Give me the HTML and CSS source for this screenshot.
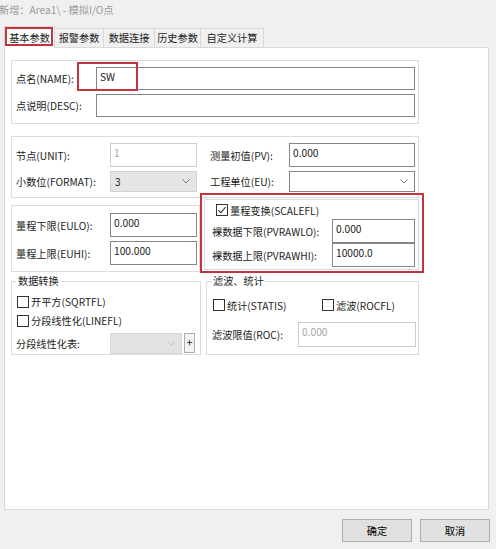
FILE: index.html
```html
<!DOCTYPE html>
<html lang="zh-CN">
<head>
<meta charset="utf-8">
<title>模拟I/O点</title>
<link rel="stylesheet" href="styles.css">
</head>
<body>
<div class="title">新增：Area1\ - 模拟I/O点</div>
<div class="tabs">
  <div class="tab tab-active t1">基本参数</div>
  <div class="tab t2">报警参数</div>
  <div class="tab t3">数据连接</div>
  <div class="tab t4">历史参数</div>
  <div class="tab t5">自定义计算</div>
</div>
<div class="panel">
  <div class="group g1">
    <div class="row name-row"><span class="lbl l80">点名(NAME):</span><div class="field f319">SW</div></div>
    <div class="row"><span class="lbl l80">点说明(DESC):</span><div class="field f319"></div></div>
  </div>

  <div class="group g2">
    <div class="col">
      <div class="row h24"><span class="lbl l94">节点(UNIT):</span><div class="field f87 h24 disabled">1</div></div>
      <div class="row h21"><span class="lbl l94">小数位(FORMAT):</span><div class="combo f87 combo-gray"><span>3</span><svg class="chev" width="8" height="5" viewBox="0 0 8 5"><path d="M0.5 0.5 L4 4 L7.5 0.5" fill="none" stroke="#777"/></svg></div></div>
    </div>
    <div class="col">
      <div class="row h24"><span class="lbl l79">测量初值(PV):</span><div class="field f126 h24">0.000</div></div>
      <div class="row h21"><span class="lbl l79">工程单位(EU):</span><div class="combo f126"><span></span><svg class="chev" width="8" height="5" viewBox="0 0 8 5"><path d="M0.5 0.5 L4 4 L7.5 0.5" fill="none" stroke="#777"/></svg></div></div>
    </div>
  </div>

  <div class="row3">
    <div class="group g3l">
      <div class="row"><span class="lbl l94">量程下限(EULO):</span><div class="field f87 h24">0.000</div></div>
      <div class="row"><span class="lbl l94">量程上限(EUHI):</span><div class="field f87 h24">100.000</div></div>
    </div>
    <div class="group g3r">
      <div class="cb-row scale-row">
        <svg class="cb" width="12" height="12" viewBox="0 0 12 12"><rect x="0.5" y="0.5" width="11" height="11" fill="#fff" stroke="#333"/><path d="M2.4 6.1 L4.8 8.6 L9.6 3.2" fill="none" stroke="#333" stroke-width="1.1"/></svg>
        <span>量程变换(SCALEFL)</span>
      </div>
      <div class="row"><span class="lbl l120">裸数据下限(PVRAWLO):</span><div class="field f83 h24">0.000</div></div>
      <div class="row"><span class="lbl l120">裸数据上限(PVRAWHI):</span><div class="field f83 h24">10000.0</div></div>
    </div>
  </div>

  <div class="row4">
    <fieldset class="fs fs-left">
      <legend>数据转换</legend>
      <div class="cb-row h19">
        <svg class="cb" width="12" height="12" viewBox="0 0 12 12"><rect x="0.5" y="0.5" width="11" height="11" fill="#fff" stroke="#333"/></svg>
        <span>开平方(SQRTFL)</span>
      </div>
      <div class="cb-row h19">
        <svg class="cb" width="12" height="12" viewBox="0 0 12 12"><rect x="0.5" y="0.5" width="11" height="11" fill="#fff" stroke="#333"/></svg>
        <span>分段线性化(LINEFL)</span>
      </div>
      <div class="row sel-row">
        <span class="lbl l94">分段线性化表:</span>
        <div class="combo f72 h20 combo-disabled"><span></span><svg class="chev" width="8" height="5" viewBox="0 0 8 5"><path d="M0.5 0.5 L4 4 L7.5 0.5" fill="none" stroke="#c4c4c4"/></svg></div>
        <div class="plus">+</div>
      </div>
    </fieldset>
    <fieldset class="fs fs-right">
      <legend>滤波、统计</legend>
      <div class="cb-row h26">
        <div class="cb-item stat">
          <svg class="cb" width="12" height="12" viewBox="0 0 12 12"><rect x="0.5" y="0.5" width="11" height="11" fill="#fff" stroke="#333"/></svg>
          <span>统计(STATIS)</span>
        </div>
        <div class="cb-item">
          <svg class="cb" width="12" height="12" viewBox="0 0 12 12"><rect x="0.5" y="0.5" width="11" height="11" fill="#fff" stroke="#333"/></svg>
          <span>滤波(ROCFL)</span>
        </div>
      </div>
      <div class="row roc-row"><span class="lbl l86">滤波限值(ROC):</span><div class="field f118 h25 disabled">0.000</div></div>
    </fieldset>
  </div>
</div>
<div class="buttons">
  <button class="btn">确定</button>
  <button class="btn">取消</button>
</div>
</body>
</html>
```
FILE: styles.css
```css
* { box-sizing: border-box; }
html, body { margin: 0; padding: 0; }
body {
  width: 496px;
  height: 549px;
  overflow: hidden;
  background: #f0f0f0;
  font-family: "Noto Sans CJK SC", "Noto Sans", sans-serif;
  font-size: 10.2px;
  color: #222;
}
.title {
  height: 20px;
  line-height: 20px;
  color: #9a9a9a;
  margin-left: -1px;
  white-space: nowrap;
}
.tabs {
  display: flex;
  align-items: flex-end;
  height: 21px;
  margin-top: 6px;
  padding-left: 4px;
}
.tab {
  height: 19px;
  line-height: 18px;
  border: 1px solid #d9d9d9;
  border-bottom: 0;
  margin-left: -1px;
  text-align: center;
  background: #f0f0f0;
  white-space: nowrap;
}
.tab:first-child { margin-left: 0; }
.t1 { width: 51px; }
.t2 { width: 50px; }
.t3 { width: 52px; }
.t4 { width: 47px; }
.t5 { width: 64px; }
.tab-active {
  position: relative;
  z-index: 1;
  height: 22px;
  margin-bottom: -1px;
  background: #fff;
  line-height: 21px;
}
.tab-active::after {
  content: "";
  position: absolute;
  left: 0;
  top: 0;
  right: 1px;
  bottom: 2px;
  border: 2px solid #c4343f;
}
.panel {
  margin-left: 4px;
  width: 485px;
  height: 463px;
  background: #fff;
  border: 1px solid #d9d9d9;
  padding: 12px 0 0 6px;
}
.group { border: 1px solid #dcdcdc; }
.row { display: flex; align-items: center; }
.lbl { flex: none; white-space: nowrap; }
.l79 { width: 79px; }
.l80 { width: 80px; }
.l86 { width: 86px; }
.l94 { width: 94px; }
.l120 { width: 120px; }
.field {
  flex: none;
  height: 23px;
  border: 1px solid #858585;
  background: #fff;
  padding: 2px 0 0 3px;
  line-height: 14px;
  white-space: nowrap;
}
.field.disabled { border-color: #cccccc; color: #a6a6a6; }
.f72 { width: 72px; }
.f83 { width: 83px; }
.f87 { width: 87px; }
.f118 { width: 118px; }
.f126 { width: 126px; }
.f319 { width: 319px; }
.h19 { height: 19px; }
.h20 { height: 20px; }
.h21 { height: 21px; }
.h24 { height: 24px; }
.h25 { height: 25px; }
.h26 { height: 26px; }
.combo {
  flex: none;
  height: 21px;
  border: 1px solid #858585;
  background: #fff;
  display: flex;
  align-items: center;
  justify-content: space-between;
  padding: 0 6px 0 4px;
}
.combo-gray { background: #e5e5e5; border-color: #d2d2d2; }
.combo-disabled { background: #e2e2e2; border-color: #d6d6d6; }
.chev { flex: none; }

/* group 1 */
.g1 {
  width: 408px;
  height: 64px;
  padding: 6px 0 0 4px;
  display: flex;
  flex-direction: column;
  gap: 4px;
}
.name-row { position: relative; }
.name-row::after {
  content: "";
  position: absolute;
  left: 61px;
  top: -5px;
  width: 57px;
  height: 25px;
  border: 2px solid #c4343f;
}

/* group 2 */
.g2 {
  width: 408px;
  height: 62px;
  margin-top: 12px;
  padding: 6px 0 0 4px;
  display: flex;
  gap: 13px;
}
.col { display: flex; flex-direction: column; gap: 4px; }

/* row 3 */
.row3 { display: flex; align-items: flex-start; margin-top: 1px; }
.g3l {
  width: 189px;
  height: 67px;
  margin-top: 6px;
  padding: 7px 0 0 4px;
  display: flex;
  flex-direction: column;
  gap: 4px;
}
.g3r {
  position: relative;
  width: 215px;
  height: 71px;
  margin-left: 4px;
  padding: 1px 0 0 7px;
  display: flex;
  flex-direction: column;
}
.g3r::after {
  content: "";
  position: absolute;
  left: -5px;
  top: -7px;
  right: -6px;
  bottom: -4px;
  border: 2px solid #c4343f;
}
.cb-row { display: flex; align-items: center; gap: 2px; white-space: nowrap; }
.scale-row { height: 18px; margin-left: 4px; }
.cb { flex: none; display: block; }

/* row 4 */
.row4 { display: flex; margin-top: 2px; }
.fs {
  margin: 0;
  min-width: 0;
  border: 1px solid #dcdcdc;
  padding: 4px 0 1px 4px;
}
.fs legend {
  padding: 0 2px;
  line-height: 14px;
  font-size: 10.2px;
}
.fs-left { width: 190px; }
.fs-left .cb-row { margin-left: 1px; }
.fs-right { width: 213px; margin-left: 5px; padding-left: 5px; }
.fs-right legend { padding: 0 1px; }
.sel-row { margin-top: 3px; height: 20px; }
.plus {
  flex: none;
  width: 11px;
  height: 20px;
  margin-left: 2px;
  border: 1px solid #adadad;
  background: #f4f4f4;
  text-align: center;
  line-height: 17px;
  font-size: 11px;
}
.cb-item { display: flex; align-items: center; gap: 2px; }
.stat { width: 107px; margin-left: 1px; }
.roc-row { margin-top: 4px; }

/* buttons */
.buttons {
  display: flex;
  justify-content: flex-end;
  gap: 8px;
  margin-top: 9px;
  padding-right: 6px;
}
.btn {
  width: 70px;
  height: 23px;
  padding: 0;
  background: #e1e1e1;
  border: 1px solid #adadad;
  font-family: inherit;
  font-size: 10.2px;
  color: #000;
}
```
